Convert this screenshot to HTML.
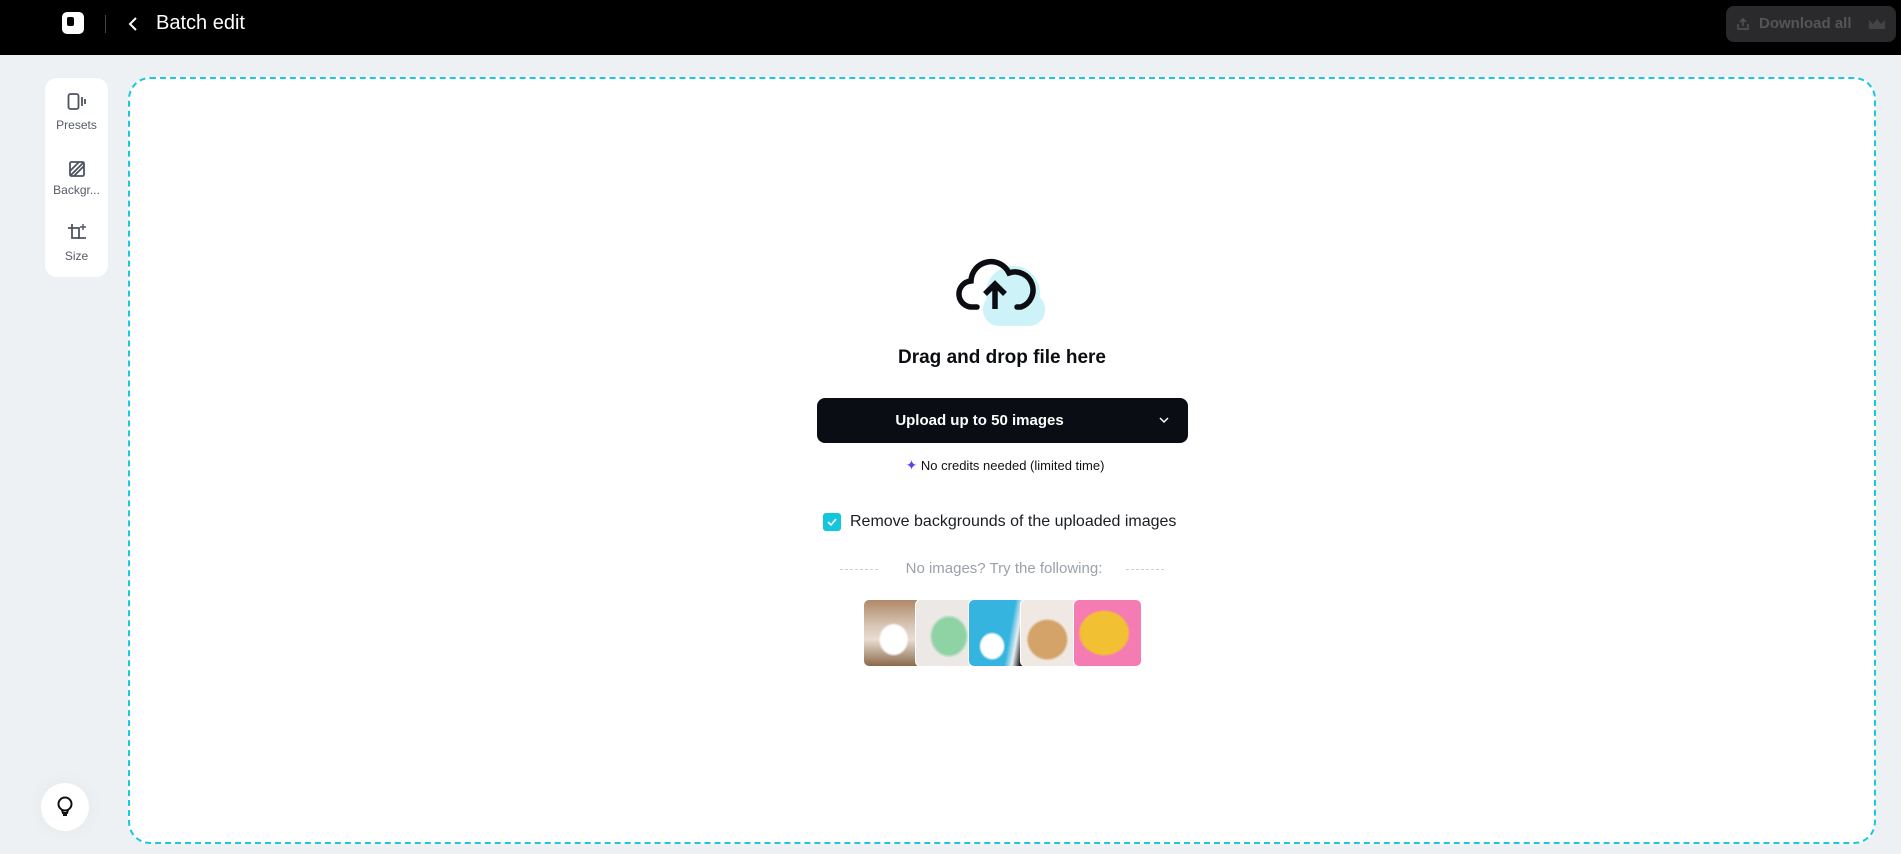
<!DOCTYPE html>
<html><head><meta charset="utf-8"><style>
*{margin:0;padding:0;box-sizing:border-box}
body{width:1901px;height:854px;background:#eef1f4;font-family:"Liberation Sans",sans-serif;position:relative;overflow:hidden}
.hdr{position:absolute;left:0;top:0;width:1901px;height:55px;background:#000}
.side{position:absolute;left:45px;top:78px;width:63px;height:199px;background:#fff;border-radius:12px}
.si{position:absolute;left:0;width:63px;text-align:center;font-size:12px;color:#555b66}
.box{position:absolute;left:128px;top:77px;width:1748px;height:767px;background:#fff;border:2px dashed #1cc8de;border-radius:22px}
.t{position:absolute;left:502px;width:1000px;text-align:center}
.tile{position:absolute;top:599px;width:68px;height:68px;border-radius:6px;border:1px solid #fff;overflow:hidden}
</style></head><body>
<div class="hdr">
 <div style="position:absolute;left:62px;top:12px;width:22px;height:22px;background:#fff;border-radius:5px"><div style="position:absolute;left:5px;top:5px;width:7px;height:9px;background:#000;border-radius:2px"></div></div>
 <div style="position:absolute;left:105px;top:15px;width:1px;height:18px;background:#444"></div>
 <svg style="position:absolute;left:126px;top:16px" width="14" height="16"><path d="M10 2 L4 8 L10 14" stroke="#fff" stroke-width="2" fill="none"/></svg>
 <div style="position:absolute;left:156px;top:12px;color:#fff;font-size:20px">Batch edit</div>
 <div style="position:absolute;left:1726px;top:6px;width:170px;height:36px;background:#2a2a2c;border-radius:8px;color:#555;font-size:15px;font-weight:bold;line-height:36px;padding-left:33px">Download all
  <svg style="position:absolute;left:10px;top:11px" width="14" height="14"><path d="M2 7v5h10V7M7 9V2M4 5l3-3 3 3" stroke="#555" stroke-width="1.4" fill="none"/></svg>
  <svg style="position:absolute;left:142px;top:12px" width="18" height="12"><path d="M1 2l4 4 4-5 4 5 4-4v9H1z" fill="#444"/></svg>
 </div>
</div>
<div class="side">
 <svg style="position:absolute;left:22px;top:14px" width="20" height="20"><rect x="1.5" y="2" width="10" height="15" rx="2" stroke="#4d5360" stroke-width="1.8" fill="none"/><path d="M15 5v9M18 7v5" stroke="#4d5360" stroke-width="1.8"/></svg>
 <div class="si" style="top:40px">Presets</div>
 <svg style="position:absolute;left:22px;top:81px" width="20" height="20"><rect x="3" y="3" width="14" height="14" rx="1.5" stroke="#4d5360" stroke-width="1.8" fill="none"/><path d="M3 12L12 3M7 17L17 7M4 16L16 4" stroke="#4d5360" stroke-width="1.8"/></svg>
 <div class="si" style="top:105px">Backgr...</div>
 <svg style="position:absolute;left:22px;top:145px" width="20" height="20"><path d="M5 1v14h14M1 5h11v11" stroke="#4d5360" stroke-width="1.8" fill="none"/><path d="M16 1v6M13 4h6" stroke="#4d5360" stroke-width="1.4"/></svg>
 <div class="si" style="top:171px">Size</div>
</div>
<div style="position:absolute;left:41px;top:783px;width:48px;height:48px;border-radius:50%;background:#fff;box-shadow:0 0 20px rgba(0,0,0,.04)">
 <svg style="position:absolute;left:14px;top:12px" width="20" height="24"><circle cx="10" cy="9" r="6.5" stroke="#111" stroke-width="2" fill="none"/><path d="M7 15l1 3h4l1-3" stroke="#111" stroke-width="2" fill="none"/><path d="M8 20h4" stroke="#111" stroke-width="2"/></svg>
</div>
<div class="box"></div>
<svg style="position:absolute;left:955px;top:253px" width="96" height="76"><circle cx="58" cy="40" r="27" fill="#cdf3f8"/><rect x="28" y="40" width="62" height="33" rx="16" fill="#cdf3f8"/>
<path d="M22 54h-4a13 13 0 0 1-2-26a20 20 0 0 1 38-8a15 15 0 0 1 12 34h-4" stroke="#0b0d12" stroke-width="5.5" fill="none" stroke-linecap="round"/><path d="M40 56V32M30 41l10-10 10 10" stroke="#0b0d12" stroke-width="5.5" fill="none"/></svg>
<div class="t" style="top:347px;font-size:19px;font-weight:bold;color:#0b0d12">Drag and drop file here</div>
<div style="position:absolute;left:817px;top:398px;width:371px;height:45px;background:#0a0d14;border-radius:8px;color:#fff;font-weight:bold;font-size:15px;line-height:45px;text-align:center;padding-right:46px">Upload up to 50 images
 <svg style="position:absolute;left:342px;top:18px" width="10" height="8"><path d="M1 2l4 4 4-4" stroke="#fff" stroke-width="1.5" fill="none"/></svg></div>
<div class="t" style="top:457px;font-size:13px;color:#111;padding-left:6px"><span style="color:#5b44e8;font-size:14px">✦</span> No credits needed (limited time)</div>
<div style="position:absolute;left:823px;top:513px;width:18px;height:18px;background:#14c6dd;border-radius:3px"><svg width="18" height="18"><path d="M5 9l3 3 5-6" stroke="#fff" stroke-width="1.6" fill="none"/></svg></div>
<div style="position:absolute;left:850px;top:513px;font-size:16px;color:#1a1d24">Remove backgrounds of the uploaded images</div>
<div style="position:absolute;left:840px;top:569px;width:38px;border-top:1px dashed #ccd;"></div>
<div style="position:absolute;left:1126px;top:569px;width:38px;border-top:1px dashed #ccd;"></div>
<div class="t" style="top:560px;font-size:15px;color:#9aa1aa;padding-left:4px">No images? Try the following:</div>
<div class="tile" style="left:863px;background:radial-gradient(ellipse at 45% 60%,#fff 25%,transparent 30%),linear-gradient(#b08866,#d9c8b8 40%,#e8ddd0 60%,#8b6a4c)"></div>
<div class="tile" style="left:915px;background:radial-gradient(ellipse at 50% 55%,#8fd3a5 35%,#ebe8e6 42%)"></div>
<div class="tile" style="left:968px;background:radial-gradient(ellipse at 35% 70%,#fff 18%,transparent 22%),linear-gradient(100deg,#36b4e0 60%,#e8eef2 70%,#222 80%,#36b4e0)"></div>
<div class="tile" style="left:1020px;background:radial-gradient(circle at 40% 60%,#d3a36a 33%,#f0e8e2 38%)"></div>
<div class="tile" style="left:1073px;width:69px;background:radial-gradient(ellipse at 45% 50%,#f1c133 45%,#f57cb2 50%)"></div>
</body></html>
